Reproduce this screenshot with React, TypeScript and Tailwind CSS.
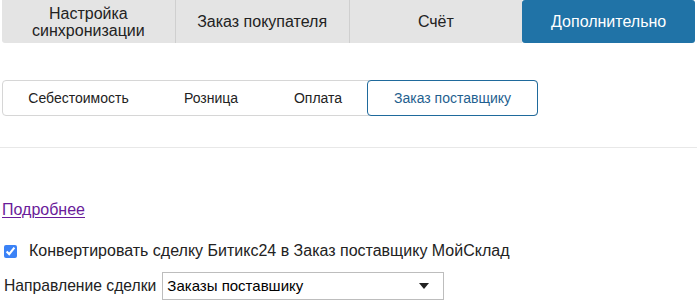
import { useState } from "react";

const topTabs = ["Настройка синхронизации", "Заказ покупателя", "Счёт", "Дополнительно"];
const subTabs = ["Себестоимость", "Розница", "Оплата", "Заказ поставщику"];

export default function App() {
  const [active] = useState(3);
  const [sub] = useState(3);
  const [checked, setChecked] = useState(true);

  return (
    <div className="w-[697px] h-[304px] bg-white overflow-hidden text-[#222] font-['Liberation_Sans',Arial,sans-serif]">
      <div className="flex pl-[2px] h-[43px]">
        {topTabs.map((t, i) => (
          <div
            key={t}
            className={`flex-1 flex items-center justify-center text-center text-[16px] leading-[17px] px-2 ${
              i === active
                ? "bg-[#2073a7] text-white rounded-[3px] mr-[2px]"
                : `bg-[#e4e4e4] ${i === 0 ? "rounded-bl-[3px]" : "border-l border-[#cfcfcf]"}`
            }`}
          >
            {t}
          </div>
        ))}
      </div>

      <div className="mt-[37px] ml-[2px] w-[536px] h-[36px] flex items-stretch border border-[#d6d6d6] rounded-[4px] text-[14px]">
        {subTabs.map((t, i) => (
          <div
            key={t}
            className={`flex items-center justify-center ${
              i === 0 ? "w-[151px]" : i === 1 ? "w-[114px]" : i === 2 ? "w-[100px]" : "flex-1"
            } ${i === sub ? "border border-[#1f6a9c] rounded-[4px] text-[#1f5f8f] -m-px" : ""}`}
          >
            {t}
          </div>
        ))}
      </div>

      <div className="mt-[31px] border-t border-[#e8e8e8]" />

      <div className="mt-[52px] ml-[2px] text-[16px] leading-[20px]">
        <a href="#" className="text-[#6a1b9a] underline underline-offset-2">
          Подробнее
        </a>
      </div>

      <label className="mt-[19px] flex items-center gap-[12px] ml-[4px] text-[16px]">
        <input
          type="checkbox"
          checked={checked}
          onChange={(e) => setChecked(e.target.checked)}
          className="w-[13px] h-[13px] accent-[#3b82f6]"
        />
        <span>Конвертировать сделку Битикс24 в Заказ поставщику МойСклад</span>
      </label>

      <div className="mt-[9px] ml-[4px] flex items-center gap-[6px] text-[15.7px]">
        <span>Направление сделки</span>
        <div className="w-[282px] h-[28px] border border-[#bdbdbd] flex items-center justify-between pl-[4px] pr-[14px] text-[15px] text-black">
          <span>Заказы поставшику</span>
          <svg width="10" height="6" viewBox="0 0 10 6">
            <path d="M0 0h10L5 6z" fill="#222" />
          </svg>
        </div>
      </div>
    </div>
  );
}
